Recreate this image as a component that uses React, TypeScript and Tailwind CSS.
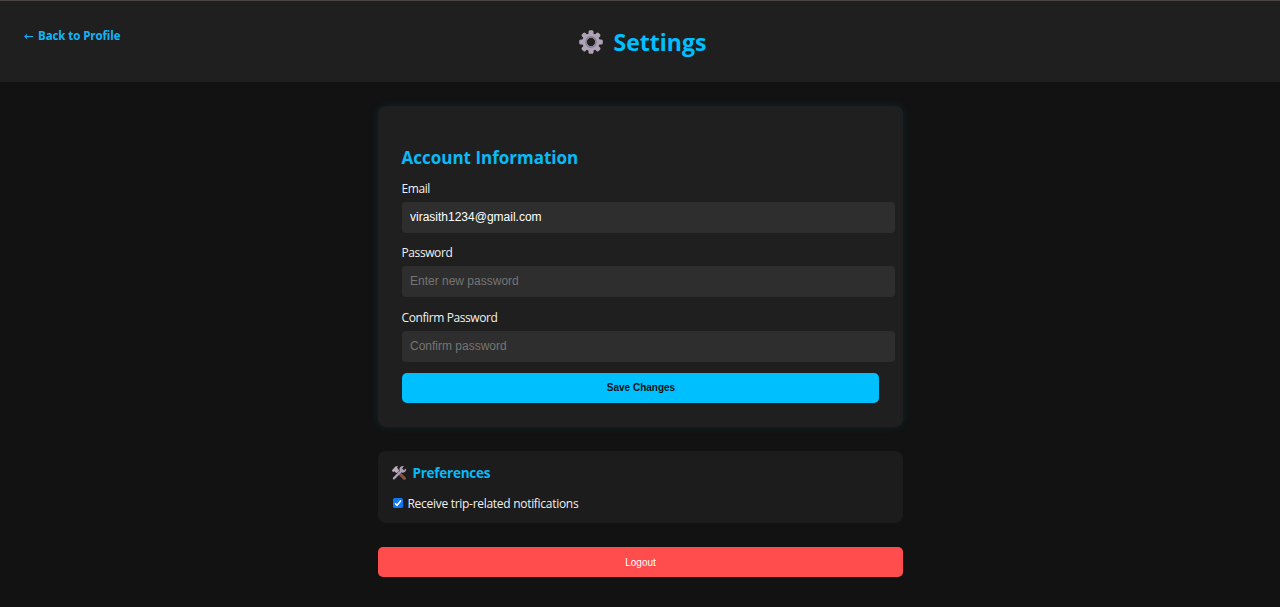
import { useState } from "react";

const UI = "font-['Open_Sans','Noto_Sans',sans-serif]";
const ARIAL = "font-['Liberation_Sans',Arial,sans-serif]";

function GearIcon() {
  const teeth = [0, 45, 90, 135, 180, 225, 270, 315];
  return (
    <svg viewBox="0 0 24 24" className="h-6 w-6 shrink-0" aria-hidden="true">
      {teeth.map((a) => (
        <rect key={a} x="9.5" y="0.2" width="5" height="6" rx="1.5" fill="#aea4b6" transform={`rotate(${a} 12 12)`} />
      ))}
      <circle cx="12" cy="12" r="6.5" fill="none" stroke="#aea4b6" strokeWidth="4.6" />
      <circle cx="12" cy="12" r="5.1" fill="none" stroke="#8b8096" strokeWidth="1.6" />
    </svg>
  );
}

function ToolsIcon() {
  return (
    <svg viewBox="0 0 16 16" className="-ml-[1px] h-4 w-4 shrink-0" aria-hidden="true">
      <path d="M6.8 7 13.5 13.3" stroke="#8a5148" strokeWidth="3" strokeLinecap="round" />
      <path d="M0.8 5.4 4.4 1.4 7 1 6.1 2.8 8.2 5.6 5.2 8.2 3.6 6.2 2.3 7.2Z" fill="#b8aebc" />
      <path d="M2.9 13.4 11 5.3" stroke="#aaa0b2" strokeWidth="2.3" strokeLinecap="round" />
      <path d="M12.9 1.1A3.4 3.4 0 1 0 15.1 3.5L12.8 5.2 11.2 3.4Z" fill="#aaa0b2" />
    </svg>
  );
}

type FieldProps = { label: string; type: string; value?: string; placeholder?: string };

function Field({ label, type, value, placeholder }: FieldProps) {
  return (
    <label className="block h-[64.3px]">
      <span className="block h-[22px] text-[12px] leading-[17px] tracking-[-0.4px] text-[#f0f0f0]">{label}</span>
      <input
        type={type}
        defaultValue={value}
        placeholder={placeholder}
        className={`block h-[31px] w-[493.5px] rounded-[4px] bg-[#2e2e2e] pr-2 pb-px pl-[8.5px] text-[12px] text-white outline-none placeholder:text-[#757575] ${ARIAL}`}
      />
    </label>
  );
}

export default function App() {
  const [notify, setNotify] = useState(true);
  return (
    <div className={`min-h-[607px] bg-[#121212] text-white ${UI}`}>
      <header className="grid h-[82px] grid-cols-[1fr_auto_1fr] border-t border-[#4a4543] bg-[#1f1f1f]">
        <a
          href="#"
          className="mt-[26px] ml-6 flex h-[18px] gap-[3px] justify-self-start text-[11.5px] leading-[18px] font-bold tracking-[-0.08px] whitespace-nowrap text-[#10b7f6]"
        >
          <span className="w-[11px] font-['DejaVu_Sans',sans-serif] font-normal">←</span>
          <span>Back to Profile</span>
        </a>
        <h1 className="mt-[25px] ml-[5px] flex h-8 items-center gap-[11px] text-[23px] leading-8 font-bold text-[#00bfff]">
          <GearIcon />
          <span>Settings</span>
        </h1>
      </header>

      <main className="mx-auto flex w-[525px] flex-col pt-6">
        <section className="h-[321px] rounded-[8px] bg-[#1f1f1f] px-6 pt-10 shadow-[0_0_10px_rgba(0,191,255,0.1)]">
          <h2 className="mb-[10px] h-6 text-[17px] leading-6 font-bold text-[#08baf8]">Account Information</h2>
          <Field label="Email" type="text" value="virasith1234@gmail.com" />
          <Field label="Password" type="password" placeholder="Enter new password" />
          <Field label="Confirm Password" type="password" placeholder="Confirm password" />
          <button
            className={`block h-[30px] w-full rounded-[5px] bg-[#00bfff] pl-[2px] text-[10px] font-bold text-[#121212] ${ARIAL}`}
          >
            Save Changes
          </button>
        </section>

        <section className="mt-6 h-[72px] rounded-[8px] bg-[#1c1c1c] px-[14px] pt-3">
          <h3 className="flex h-5 items-center gap-[6px] text-[13.5px] leading-5 font-bold tracking-[-0.25px] text-[#08baf8]">
            <ToolsIcon />
            <span>Preferences</span>
          </h3>
          <label className="mt-3 flex h-[18px] items-center text-[12px] leading-[18px] tracking-[-0.29px] text-[#f0f0f0]">
            <input
              type="checkbox"
              checked={notify}
              onChange={(e) => setNotify(e.target.checked)}
              className="peer sr-only"
            />
            <svg viewBox="0 0 10 10" className="mr-[5px] mb-[2px] ml-[1px] h-[10px] w-[10px]" aria-hidden="true">
              <rect width="10" height="10" rx="1.6" fill={notify ? "#0f75f0" : "#fff"} />
              {notify && <path d="M2 5.3 4 7.3 8 2.6" fill="none" stroke="#fff" strokeWidth="1.6" />}
            </svg>
            <span>Receive trip-related notifications</span>
          </label>
        </section>

        <button className={`mt-6 h-[30px] w-full rounded-[5px] bg-[#ff4d4d] pl-px text-[10px] text-white ${ARIAL}`}>
          Logout
        </button>
      </main>
    </div>
  );
}
